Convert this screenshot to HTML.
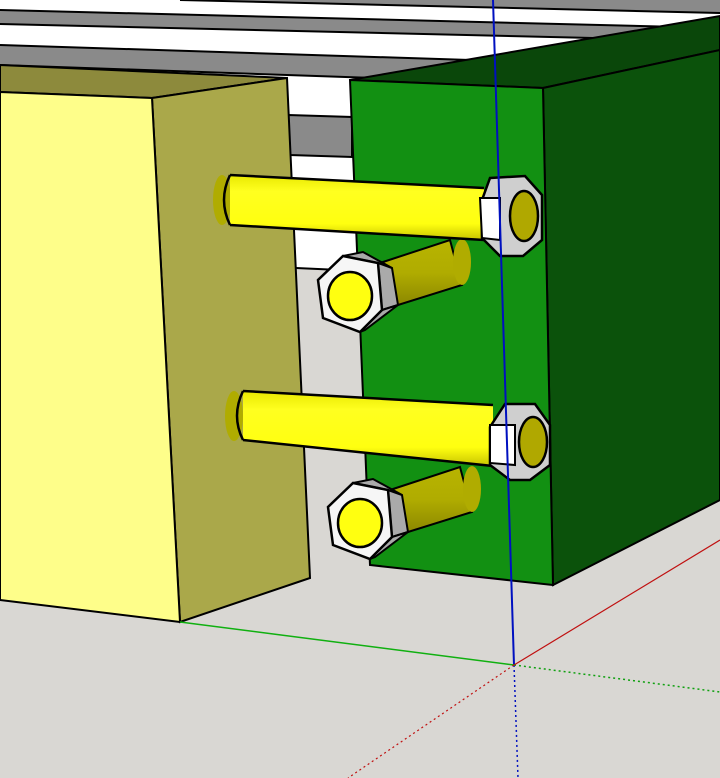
<!DOCTYPE html>
<html><head><meta charset="utf-8"><style>html,body{margin:0;padding:0;background:#fff}svg{display:block}</style></head>
<body>
<svg width="720" height="778" viewBox="0 0 720 778" xmlns="http://www.w3.org/2000/svg">
<defs>
<linearGradient id="ys" x1="0" y1="0" x2="0" y2="1">
<stop offset="0" stop-color="#e8e800"/><stop offset="0.25" stop-color="#ffff20"/><stop offset="0.75" stop-color="#ffff10"/><stop offset="1" stop-color="#c8c400"/></linearGradient>
<linearGradient id="yo" x1="0" y1="0" x2="0" y2="1">
<stop offset="0" stop-color="#b8b400"/><stop offset="0.5" stop-color="#b0ac00"/><stop offset="1" stop-color="#8c8800"/></linearGradient>
<g id="hb">
<polygon points="383,262 450,240 462,285 398,305" fill="url(#yo)" stroke="#000" stroke-width="2"/>
<ellipse cx="462" cy="262" rx="9" ry="23" fill="#b0ac00"/>
<polygon points="343,256 363,252 392,268 378,263" fill="#aaaaaa" stroke="#000" stroke-width="2"/>
<polygon points="378,263 392,268 398,305 382,310" fill="#aaaaaa" stroke="#000" stroke-width="2"/>
<polygon points="382,310 398,305 365,330 360,332" fill="#aaaaaa" stroke="#000" stroke-width="2"/>
<polygon points="343,256 378,263 382,310 360,332 323,318 318,280" fill="#f6f6f6" stroke="#000" stroke-width="2.5"/>
<ellipse cx="350" cy="296" rx="22" ry="24" fill="#ffff10" stroke="#000" stroke-width="2.5"/>
</g>
</defs>
<rect width="720" height="778" fill="#ffffff"/>
<!-- top stripes -->
<polygon points="0,10 720,28 720,41 0,24" fill="#8a8a8a"/>
<polygon points="0,45 720,68 720,90 0,65" fill="#8a8a8a"/>
<polygon points="180,0 720,0 720,13" fill="#8a8a8a"/>
<g stroke="#000" stroke-width="2">
<line x1="180" y1="0" x2="720" y2="13"/>
<line x1="0" y1="10" x2="720" y2="28"/><line x1="0" y1="24" x2="720" y2="41"/>
<line x1="0" y1="45" x2="720" y2="68"/><line x1="0" y1="65" x2="720" y2="90"/>
</g>
<!-- gap stripes -->
<polygon points="288,115 352,117 352,157 290,155" fill="#8a8a8a" stroke="#000" stroke-width="2"/>
<!-- ground -->
<polygon points="0,590 296,268 362,270 720,270 720,778 0,778" fill="#d9d7d3"/>
<line x1="296" y1="268" x2="362" y2="271" stroke="#000" stroke-width="2"/>
<!-- yellow block -->
<polygon points="0,65 287,78 152,98 0,92" fill="#8d8a3c" stroke="#000" stroke-width="2"/>
<polygon points="152,98 287,78 310,578 180,622" fill="#aaa84a" stroke="#000" stroke-width="2"/>
<polygon points="0,92 152,98 180,622 0,600" fill="#fefe8a" stroke="#000" stroke-width="2"/>
<!-- green block -->
<polygon points="350,80 720,16 720,50 543,88" fill="#0a470a" stroke="#000" stroke-width="2"/>
<polygon points="543,88 720,50 720,500 553,585" fill="#0b520b" stroke="#000" stroke-width="2"/>
<polygon points="350,80 543,88 553,585 370,565" fill="#129012" stroke="#000" stroke-width="2"/>
<!-- bolt 2 and 4 -->
<use href="#hb"/>
<use href="#hb" transform="translate(10,227)"/>
<!-- bolt 1 -->
<ellipse cx="222" cy="200" rx="9" ry="25" fill="#b0ac00"/>
<polygon points="230,175 484,188 484,240 230,225" fill="url(#ys)"/>
<path d="M230,175 L484,188 M230,225 L484,240 M230,175 Q218,200 230,225" stroke="#000" stroke-width="2.5" fill="none"/>
<polygon points="490,178 525,176 542,195 542,240 523,256 500,256 482,238 482,200" fill="#cfcfcf" stroke="#000" stroke-width="2.5"/>
<polygon points="480,198 500,198 500,240 482,238" fill="#ffffff" stroke="#000" stroke-width="2"/>
<ellipse cx="524" cy="216" rx="14" ry="25" fill="#b0a800" stroke="#000" stroke-width="2.5"/>
<!-- bolt 3 -->
<ellipse cx="234" cy="416" rx="9" ry="25" fill="#b0ac00"/>
<polygon points="243,391 493,405 493,466 243,440" fill="url(#ys)"/>
<path d="M243,391 L493,405 M243,440 L493,466 M243,391 Q231,416 243,440" stroke="#000" stroke-width="2.5" fill="none"/>
<polygon points="505,404 535,404 550,425 550,465 530,480 510,480 490,465 490,427" fill="#cfcfcf" stroke="#000" stroke-width="2.5"/>
<polygon points="490,425 515,425 515,465 490,463" fill="#ffffff" stroke="#000" stroke-width="2"/>
<ellipse cx="533" cy="442" rx="14" ry="25" fill="#b0a800" stroke="#000" stroke-width="2.5"/>
<!-- axes -->
<line x1="493" y1="0" x2="514" y2="665" stroke="#0010c0" stroke-width="2"/>
<line x1="514" y1="665" x2="518" y2="778" stroke="#0010c0" stroke-width="1.5" stroke-dasharray="2,3"/>
<line x1="180" y1="622" x2="514" y2="665" stroke="#10b010" stroke-width="1.5"/>
<line x1="514" y1="665" x2="720" y2="692" stroke="#10a010" stroke-width="1.5" stroke-dasharray="2,3"/>
<line x1="514" y1="665" x2="720" y2="540" stroke="#c01010" stroke-width="1.2"/>
<line x1="514" y1="665" x2="348" y2="778" stroke="#c01010" stroke-width="1.2" stroke-dasharray="2,3"/>
</svg>
</body></html>
